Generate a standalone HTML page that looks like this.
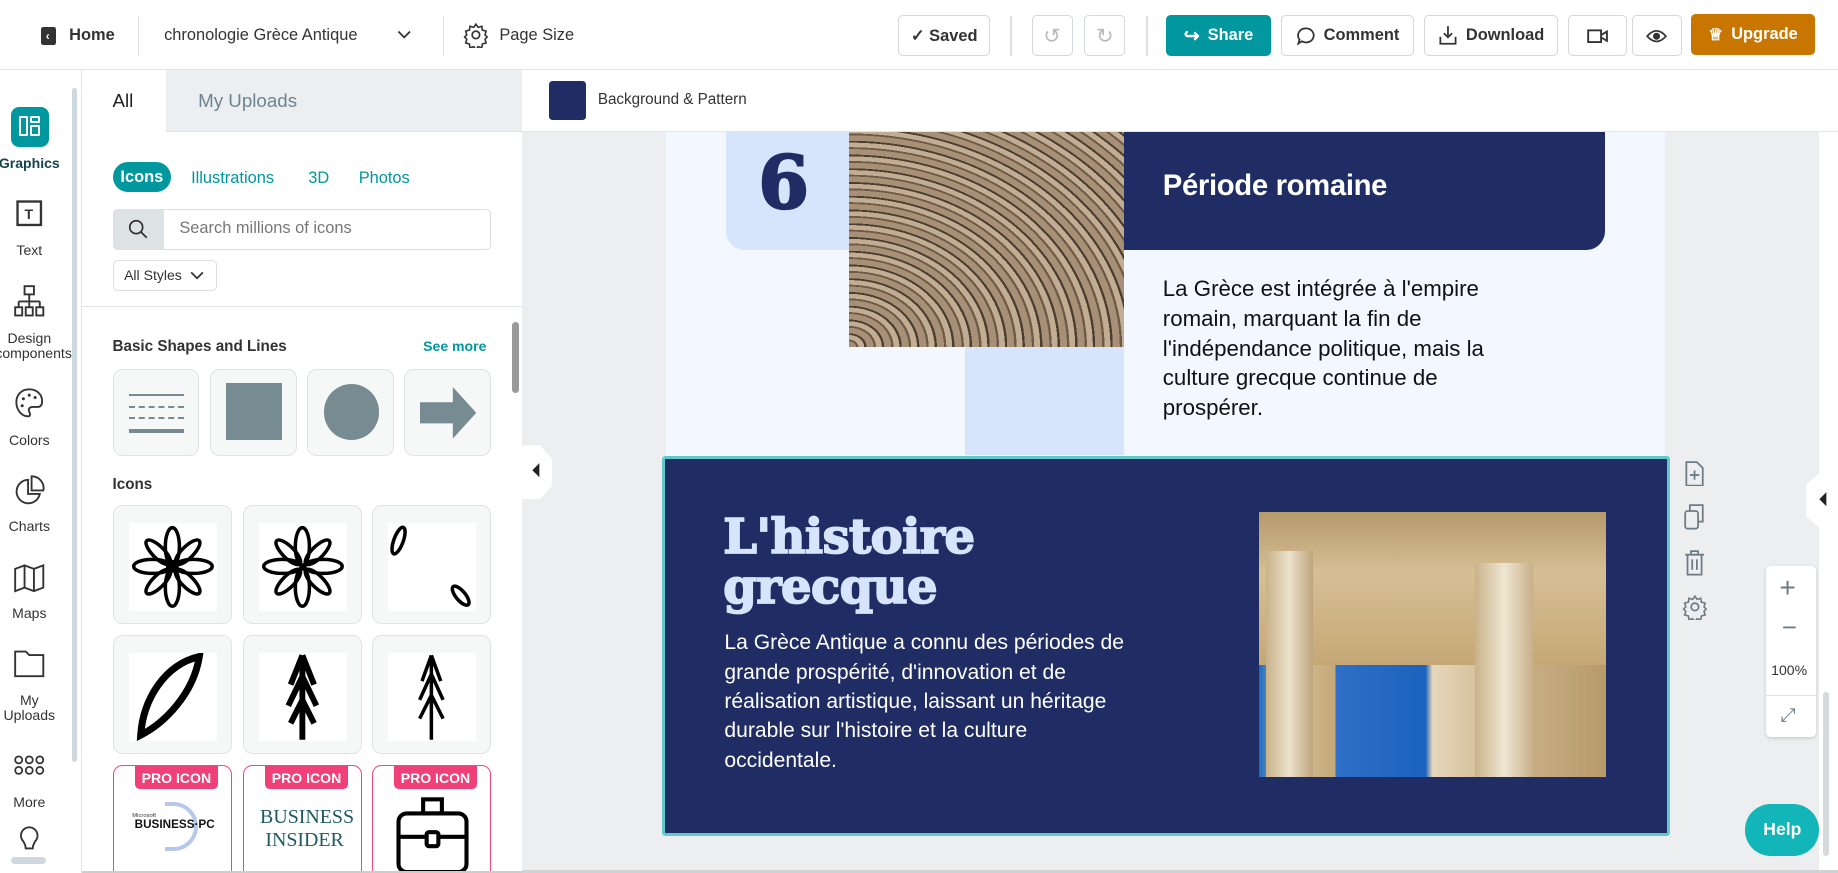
<!DOCTYPE html>
<html><head><meta charset="utf-8"><style>
*{box-sizing:border-box;margin:0;padding:0}
html,body{width:1838px;height:873px;overflow:hidden;background:#fff}
#w{position:relative;width:1568px;height:745px;zoom:1.17219;font-family:"Liberation Sans",sans-serif;color:#333;overflow:hidden}
.a{position:absolute}
.btn{position:absolute;top:13px;height:35px;border:1px solid #d5d8dc;border-radius:4px;background:#fff;font-size:14px;font-weight:bold;color:#333;display:flex;align-items:center;justify-content:center;gap:7px}
.vd{position:absolute;top:14px;width:1px;height:34px;background:#dde0e3}
.rl{position:absolute;left:0;width:58px;text-align:center;font-size:12px;color:#333;line-height:13px}
.ic{position:absolute;left:12px}
.tile{position:absolute;border:1px solid #e0e3e6;border-radius:8px;background:#f6f7f7}
.pro{border-color:#f0497a;background:#fff}
.pro span{position:absolute;left:18px;top:0;background:#f0407a;color:#fff;font-size:12px;font-weight:bold;padding:3px 6px;border-radius:0 0 4px 4px}
</style></head><body><div id="w">
<!-- top bar -->
<div class="a" style="left:0;top:0;width:1568px;height:60px;background:#fff;border-bottom:1px solid #e0e2e5"></div>
<div class="a" style="left:35px;top:23px;width:13px;height:15px;background:#333;border-radius:2px"></div>
<div class="a" style="left:39px;top:26px;color:#fff;font-size:10px;font-weight:bold">‹</div>
<div class="a" style="left:59px;top:22px;font-size:14px;font-weight:bold">Home</div>
<div class="vd" style="left:118px"></div>
<div class="a" style="left:140px;top:22px;font-size:14px;color:#333">chronologie Grèce Antique</div>
<svg class="a" style="left:338px;top:24px" width="14" height="12"><path d="M2 3l5 5 5-5" fill="none" stroke="#333" stroke-width="1.5"/></svg>
<div class="vd" style="left:378px"></div>
<svg class="a" style="left:395px;top:19px" width="22" height="22" viewBox="0 0 24 24"><circle cx="12" cy="12" r="3.5" fill="none" stroke="#333" stroke-width="1.6"/><path d="M12 2l2 3 3.5-1 .5 3.5 3.5 1-1 3.5 2 2-2 2 1 3.5-3.5 1-.5 3.5-3.5-1-2 3-2-3-3.5 1-.5-3.5-3.5-1 1-3.5-2-2 2-2-1-3.5 3.5-1 .5-3.5 3.5 1z" fill="none" stroke="#333" stroke-width="1.5"/></svg>
<div class="a" style="left:426px;top:22px;font-size:14px;color:#333">Page Size</div>
<div class="btn" style="left:766px;width:79px">✓ Saved</div>
<div class="vd" style="left:862px"></div>
<div class="btn" style="left:880px;width:35px;color:#bbb;font-weight:normal;font-size:18px">↺</div>
<div class="btn" style="left:925px;width:35px;color:#bbb;font-weight:normal;font-size:18px">↻</div>
<div class="vd" style="left:978px"></div>
<div class="btn" style="left:995px;width:89px;background:#00979f;border-color:#00979f;color:#fff"><span style="font-size:16px">↪</span>Share</div>
<div class="btn" style="left:1093px;width:113px;font-weight:bold"><svg width="17" height="17"><path d="M8.5 2a6.5 6 0 1 1-3.5 11L2 15l1-3.5A6.5 6 0 0 1 8.5 2z" fill="none" stroke="#333" stroke-width="1.5"/></svg>Comment</div>
<div class="btn" style="left:1215px;width:114px"><svg width="17" height="18"><path d="M8.5 1v9M5 7l3.5 3.5L12 7M2 10v6h13v-6" fill="none" stroke="#333" stroke-width="1.5"/></svg>Download</div>
<div class="btn" style="left:1338px;width:50px"><svg width="18" height="14"><rect x="1" y="2" width="11" height="10" fill="none" stroke="#333" stroke-width="1.6"/><path d="M12 6l5-3v8l-5-3" fill="none" stroke="#333" stroke-width="1.6"/></svg></div>
<div class="btn" style="left:1392px;width:43px"><svg width="18" height="14"><path d="M1 7q8-9 16 0q-8 9-16 0z" fill="none" stroke="#333" stroke-width="1.5"/><circle cx="9" cy="7" r="3" fill="#333"/></svg></div>
<div class="btn" style="left:1443px;width:105px;background:#c87600;border-color:#c87600;color:#fff;top:12px"><span style="font-size:14px">♕</span>Upgrade</div>

<!-- left rail -->
<div class="a" style="left:0;top:60px;width:70px;height:685px;background:#fff;border-right:1px solid #e3e5e7"></div>
<div class="a" style="left:61px;top:75px;width:5px;height:575px;background:#cfd8de;border-radius:3px"></div>
<div class="a" style="left:9px;top:91px;width:33px;height:34px;background:#00979f;border-radius:7px"></div>
<div class="a" style="left:16px;top:99px;width:8px;height:17px;border:2px solid #fff;border-radius:1px"></div>
<div class="a" style="left:26px;top:99px;width:8px;height:6px;border:2px solid #fff;border-radius:1px"></div>
<div class="a" style="left:26px;top:107px;width:8px;height:9px;border:2px solid #fff;border-radius:1px"></div>
<div class="rl" style="left:-4px;top:133px;width:58px;font-weight:bold;color:#16434d">Graphics</div>
<svg class="ic" style="top:169px" width="26" height="26"><rect x="3" y="3" width="20" height="20" fill="none" stroke="#333" stroke-width="2"/><text x="9" y="18" font-size="12" font-weight="bold" font-family="Liberation Sans" fill="#333">T</text></svg>
<div class="rl" style="left:-4px;top:207px">Text</div>
<svg class="ic" style="top:243px" width="26" height="28"><rect x="9" y="1" width="8" height="7" fill="none" stroke="#333" stroke-width="1.6"/><path d="M13 8v6M4 14h18M4 14v5M13 14v5M22 14v5" stroke="#333" stroke-width="1.6" fill="none"/><rect x="1" y="19" width="6" height="7" fill="none" stroke="#333" stroke-width="1.6"/><rect x="10" y="19" width="6" height="7" fill="none" stroke="#333" stroke-width="1.6"/><rect x="19" y="19" width="6" height="7" fill="none" stroke="#333" stroke-width="1.6"/></svg>
<div class="rl" style="left:-4px;top:282px">Design<br>components</div>
<svg class="ic" style="top:330px" width="26" height="28"><path d="M13 2C6 2 2 7 2 13s4 12 10 12c2 0 2-2 1-4s0-4 3-4h4c3 0 4-2 4-5C24 6 19 2 13 2z" fill="none" stroke="#333" stroke-width="1.6"/><circle cx="8" cy="10" r="1.3" fill="#333"/><circle cx="13" cy="7" r="1.3" fill="#333"/><circle cx="18" cy="9" r="1.3" fill="#333"/><circle cx="7" cy="16" r="1.3" fill="#333"/></svg>
<div class="rl" style="left:-4px;top:369px">Colors</div>
<svg class="ic" style="top:404px" width="26" height="28"><path d="M12 5a10 10 0 1 0 10 12H12z" fill="none" stroke="#333" stroke-width="1.6"/><path d="M15 2v12h10A10 10 0 0 0 15 2z" fill="none" stroke="#333" stroke-width="1.6"/></svg>
<div class="rl" style="left:-4px;top:443px">Charts</div>
<svg class="ic" style="top:480px" width="26" height="26"><path d="M1 5l8-3 8 3 8-3v19l-8 3-8-3-8 3z M9 2v19M17 5v19" fill="none" stroke="#333" stroke-width="1.6"/></svg>
<div class="rl" style="left:-4px;top:517px">Maps</div>
<svg class="ic" style="top:553px" width="26" height="26"><path d="M1 3h9l3 3h12v18H1z" fill="none" stroke="#333" stroke-width="1.6"/></svg>
<div class="rl" style="left:-4px;top:591px">My<br>Uploads</div>
<svg class="ic" style="top:643px" width="26" height="20"><g fill="none" stroke="#333" stroke-width="1.5"><circle cx="4" cy="5" r="3"/><circle cx="13" cy="5" r="3"/><circle cx="22" cy="5" r="3"/><circle cx="4" cy="14" r="3"/><circle cx="13" cy="14" r="3"/><circle cx="22" cy="14" r="3"/></g></svg>
<div class="rl" style="left:-4px;top:678px">More</div>
<svg class="ic" style="top:704px" width="26" height="24"><path d="M13 2a7 7 0 0 0-5 12c1 2 2 3 2 6h6c0-3 1-4 2-6a7 7 0 0 0-5-12z" fill="none" stroke="#333" stroke-width="1.6"/></svg>
<div class="a" style="left:9px;top:731px;width:30px;height:6px;background:#cfd8de;border-radius:3px"></div>

<!-- panel -->
<div class="a" style="left:70px;top:60px;width:375px;height:685px;background:#fff"></div>
<div class="a" style="left:142px;top:60px;width:303px;height:53px;background:#eceff1;border-bottom:1px solid #e0e3e6"></div>
<div class="a" style="left:96px;top:77px;font-size:16px;color:#222">All</div>
<div class="a" style="left:169px;top:77px;font-size:16px;color:#6e8390">My Uploads</div>
<div class="a" style="left:96px;top:138px;width:50px;height:26px;background:#00979f;border-radius:13px;color:#fff;font-size:14px;font-weight:bold;text-align:center;line-height:26px">Icons</div>
<div class="a" style="left:163px;top:144px;font-size:14px;color:#00979f">Illustrations</div>
<div class="a" style="left:263px;top:144px;font-size:14px;color:#00979f">3D</div>
<div class="a" style="left:306px;top:144px;font-size:14px;color:#00979f">Photos</div>
<div class="a" style="left:96px;top:178px;width:323px;height:35px;border:1px solid #dcdfe2;border-radius:4px;background:#fff"></div>
<div class="a" style="left:96px;top:178px;width:44px;height:35px;background:#dde2e5;border-radius:4px 0 0 4px"></div>
<svg class="a" style="left:109px;top:187px" width="18" height="18"><circle cx="7" cy="7" r="5.5" fill="none" stroke="#333" stroke-width="1.5"/><path d="M11 11l5 5" stroke="#333" stroke-width="1.5"/></svg>
<div class="a" style="left:153px;top:187px;font-size:14px;color:#777">Search millions of icons</div>
<div class="a" style="left:96px;top:222px;width:89px;height:26px;border:1px solid #dcdfe2;border-radius:4px;font-size:12px;line-height:24px;padding-left:9px;color:#333">All Styles</div>
<svg class="a" style="left:162px;top:230px" width="12" height="10"><path d="M1 2l5 5 5-5" fill="none" stroke="#333" stroke-width="1.5"/></svg>
<div class="a" style="left:70px;top:261px;width:375px;height:1px;background:#e0e3e6"></div>
<div class="a" style="left:96px;top:288px;font-size:13px;font-weight:bold;color:#333">Basic Shapes and Lines</div>
<div class="a" style="left:361px;top:288px;font-size:12px;font-weight:bold;color:#00979f">See more</div>
<div class="a" style="left:437px;top:275px;width:6px;height:60px;background:#999;border-radius:3px"></div>
<div class="tile" style="left:96px;top:315px;width:74px;height:74px"></div>
<div class="a" style="left:110px;top:336px;width:47px;height:2px;background:#778b93"></div>
<div class="a" style="left:110px;top:346px;width:47px;border-top:2px dashed #778b93"></div>
<div class="a" style="left:110px;top:356px;width:47px;border-top:2px dashed #778b93"></div>
<div class="a" style="left:110px;top:366px;width:47px;height:3px;background:#778b93"></div>
<div class="tile" style="left:179px;top:315px;width:74px;height:74px"></div>
<div class="a" style="left:193px;top:327px;width:48px;height:48px;background:#778b93"></div>
<div class="tile" style="left:262px;top:315px;width:74px;height:74px"></div>
<div class="a" style="left:276px;top:328px;width:47px;height:47px;background:#778b93;border-radius:50%"></div>
<div class="tile" style="left:345px;top:315px;width:74px;height:74px"></div>
<svg class="a" style="left:358px;top:330px" width="48" height="44"><path d="M0 13h28V0l20 22-20 22V31H0z" fill="#778b93"/></svg>
<div class="a" style="left:96px;top:406px;font-size:13px;font-weight:bold;color:#333">Icons</div>
<!-- icon tiles -->
<div class="tile" style="left:96px;top:431px;width:102px;height:101px"><div class="a" style="left:13px;top:14px;width:75px;height:75px;background:#fff"></div><svg class="a" style="left:13px;top:14px" width="75" height="75" viewBox="0 0 75 75"><g fill="none" stroke="#000" stroke-width="3"><ellipse cx="37" cy="20" rx="6" ry="16"/><ellipse cx="37" cy="55" rx="6" ry="16"/><ellipse cx="20" cy="37" rx="16" ry="6"/><ellipse cx="55" cy="37" rx="16" ry="6"/><ellipse cx="25" cy="25" rx="5" ry="14" transform="rotate(-45 25 25)"/><ellipse cx="50" cy="50" rx="5" ry="14" transform="rotate(-45 50 50)"/><ellipse cx="50" cy="25" rx="5" ry="14" transform="rotate(45 50 25)"/><ellipse cx="25" cy="50" rx="5" ry="14" transform="rotate(45 25 50)"/><circle cx="37" cy="37" r="4"/></g></svg></div>
<div class="tile" style="left:207px;top:431px;width:102px;height:101px"><div class="a" style="left:13px;top:14px;width:75px;height:75px;background:#fff"></div><svg class="a" style="left:13px;top:14px" width="75" height="75" viewBox="0 0 75 75"><g fill="none" stroke="#000" stroke-width="3"><ellipse cx="37" cy="20" rx="6" ry="16"/><ellipse cx="37" cy="55" rx="6" ry="16"/><ellipse cx="20" cy="37" rx="16" ry="6"/><ellipse cx="55" cy="37" rx="16" ry="6"/><ellipse cx="25" cy="25" rx="5" ry="14" transform="rotate(-45 25 25)"/><ellipse cx="50" cy="50" rx="5" ry="14" transform="rotate(-45 50 50)"/><ellipse cx="50" cy="25" rx="5" ry="14" transform="rotate(45 50 25)"/><ellipse cx="25" cy="50" rx="5" ry="14" transform="rotate(45 25 50)"/></g></svg></div>
<div class="tile" style="left:317px;top:431px;width:102px;height:101px"><div class="a" style="left:13px;top:14px;width:75px;height:75px;background:#fff"></div><svg class="a" style="left:13px;top:14px" width="75" height="75"><g fill="none" stroke="#000" stroke-width="3"><ellipse cx="9" cy="15" rx="4" ry="12" transform="rotate(20 9 15)"/><ellipse cx="62" cy="62" rx="4" ry="10" transform="rotate(-40 62 62)"/></g></svg></div>
<div class="tile" style="left:96px;top:542px;width:102px;height:101px"><div class="a" style="left:13px;top:14px;width:75px;height:75px;background:#fff"></div><svg class="a" style="left:13px;top:14px" width="75" height="75"><path d="M60 3C30 10 12 40 10 70C30 60 55 35 60 3z" fill="none" stroke="#000" stroke-width="6"/></svg></div>
<div class="tile" style="left:207px;top:542px;width:102px;height:101px"><div class="a" style="left:13px;top:14px;width:75px;height:75px;background:#fff"></div><svg class="a" style="left:13px;top:14px" width="75" height="75"><path d="M37 2v72M37 2l-10 25M37 2l10 25M37 20l-12 25M37 20l12 25M37 40l-10 20M37 40l10 20" fill="none" stroke="#000" stroke-width="5"/></svg></div>
<div class="tile" style="left:317px;top:542px;width:102px;height:101px"><div class="a" style="left:13px;top:14px;width:75px;height:75px;background:#fff"></div><svg class="a" style="left:13px;top:14px" width="75" height="75"><path d="M37 2v72M37 2l-8 22M37 2l8 22M37 18l-10 22M37 18l10 22M37 36l-10 20M37 36l10 20" fill="none" stroke="#000" stroke-width="3"/></svg></div>
<div class="tile pro" style="left:96px;top:653px;width:102px;height:100px"><div class="a" style="left:13px;top:26px;width:75px;height:70px;background:#fff"></div><span>PRO ICON</span><div class="a" style="left:16px;top:40px;font-size:5px">Microsoft</div><div class="a" style="left:44px;top:30px;width:28px;height:42px;border:4px solid #b8c8ea;border-left:none;border-radius:0 30px 30px 0"></div><div class="a" style="left:18px;top:44px;font-size:10px;font-weight:bold;color:#111">BUSINESS·PC</div></div>
<div class="tile pro" style="left:207px;top:653px;width:102px;height:100px"><span>PRO ICON</span><div class="a" style="left:14px;top:34px;font-family:'Liberation Serif',serif;font-size:17px;color:#1e5a60;line-height:19px;text-align:center;width:76px">BUSINESS<br>INSIDER</div></div>
<div class="tile pro" style="left:317px;top:653px;width:102px;height:100px"><span>PRO ICON</span><svg class="a" style="left:19px;top:26px" width="64" height="66"><g fill="none" stroke="#000" stroke-width="3.5"><rect x="3" y="14" width="58" height="50" rx="7"/><rect x="24" y="2" width="16" height="12"/><path d="M3 34h58"/><rect x="27" y="30" width="10" height="12" rx="2" fill="#fff"/></g></svg></div>
<div class="a" style="left:70px;top:743px;width:375px;height:2px;background:#ccc"></div>

<!-- canvas -->
<div class="a" style="left:445px;top:60px;width:1123px;height:685px;background:#eceef0"></div>
<div class="a" style="left:445px;top:60px;width:1123px;height:53px;background:#fff;border-bottom:1px solid #e4e6e8"></div>
<div class="a" style="left:468px;top:69px;width:32px;height:33px;background:#1f2d64;border-radius:3px"></div>
<div class="a" style="left:510px;top:78px;font-size:13px;color:#333">Background &amp; Pattern</div>
<div class="a" style="left:445px;top:380px;width:26px;height:46px;background:#fff;clip-path:polygon(0 0,60% 0,100% 25%,100% 75%,60% 100%,0 100%)"></div>
<svg class="a" style="left:452px;top:394px" width="10" height="14"><path d="M8 1L2 7l6 6z" fill="#222"/></svg>
<!-- page top -->
<div class="a" style="left:568px;top:113px;width:852px;height:276px;background:#f3f7ff"></div>
<div class="a" style="left:619px;top:113px;width:140px;height:100px;background:#d6e4fc;border-radius:0 0 0 16px"></div>
<div class="a" style="left:647px;top:122px;font-family:'DejaVu Serif','Liberation Serif',serif;font-weight:900;font-size:62px;color:#1f2d64;line-height:70px;-webkit-text-stroke:2px #1f2d64">6</div>
<div class="a" style="left:823px;top:296px;width:136px;height:92px;background:#d6e4fc"></div>
<div class="a" style="left:724px;top:113px;width:235px;height:183px;background:repeating-radial-gradient(ellipse at 0% 100%,#a89076 0 6px,#6d5a48 6px 8px,#c2ad92 8px 13px,#4a3e33 13px 15px);"></div>
<div class="a" style="left:959px;top:113px;width:410px;height:100px;background:#1f2d64;border-radius:0 0 16px 0"></div>
<div class="a" style="left:992px;top:144px;font-size:25px;font-weight:bold;color:#fff;letter-spacing:-0.3px">Période romaine</div>
<div class="a" style="left:992px;top:234px;font-size:19px;line-height:25.3px;color:#111;width:320px">La Grèce est intégrée à l'empire romain, marquant la fin de l'indépendance politique, mais la culture grecque continue de prospérer.</div>
<!-- selected page -->
<div class="a" style="left:565px;top:389px;width:860px;height:324px;background:#1f2d64;border:3px solid #5fc9cc;border-radius:3px"></div>
<div class="a" style="left:617px;top:438px;font-family:'DejaVu Serif','Liberation Serif',serif;font-weight:900;font-size:41px;line-height:42px;color:#d6e4fc;letter-spacing:-0.5px;-webkit-text-stroke:1.5px #d6e4fc">L'histoire<br>grecque</div>
<div class="a" style="left:618px;top:536px;font-size:18px;line-height:25px;color:#fff;white-space:nowrap">La Grèce Antique a connu des périodes de<br>grande prospérité, d'innovation et de<br>réalisation artistique, laissant un héritage<br>durable sur l'histoire et la culture<br>occidentale.</div>
<div class="a" style="left:1074px;top:437px;width:296px;height:226px;background:linear-gradient(90deg,#1a6cc4 0,#d9c59e 8%,#c4a878 22%,#2f6fc6 22%,#1b63be 48%,#e6d7bb 50%,#cdb58c 70%,#b79a6a 100%)"></div>
<div class="a" style="left:1074px;top:437px;width:296px;height:130px;background:linear-gradient(180deg,#b59a6c,#d5bf94 40%,#c6a876 100%)"></div>
<div class="a" style="left:1258px;top:480px;width:50px;height:183px;background:linear-gradient(90deg,#c9b28a,#efe6d2,#c8b08a)"></div>
<div class="a" style="left:1080px;top:470px;width:40px;height:193px;background:linear-gradient(90deg,#c9b28a,#ece2cc,#bda47c)"></div>
<!-- side tools -->
<svg class="a" style="left:1437px;top:393px" width="18" height="22"><path d="M2 1h9l5 5v15H2z" fill="none" stroke="#6d7b85" stroke-width="1.5"/><path d="M9 8v8M5 12h8" stroke="#6d7b85" stroke-width="1.5"/></svg>
<svg class="a" style="left:1437px;top:430px" width="18" height="22"><rect x="1" y="6" width="11" height="15" rx="2" fill="none" stroke="#6d7b85" stroke-width="1.5"/><path d="M5 6V1h11v14h-4" fill="none" stroke="#6d7b85" stroke-width="1.5"/></svg>
<svg class="a" style="left:1437px;top:469px" width="18" height="22"><path d="M1 4h16M6 4V1h6v3M3 4v17h12V4M7 8v9M11 8v9" fill="none" stroke="#6d7b85" stroke-width="1.5"/></svg>
<svg class="a" style="left:1435px;top:507px" width="22" height="22" viewBox="0 0 24 24"><circle cx="12" cy="12" r="3.5" fill="none" stroke="#6d7b85" stroke-width="1.6"/><path d="M12 2l2 3 3.5-1 .5 3.5 3.5 1-1 3.5 2 2-2 2 1 3.5-3.5 1-.5 3.5-3.5-1-2 3-2-3-3.5 1-.5-3.5-3.5-1 1-3.5-2-2 2-2-1-3.5 3.5-1 .5-3.5 3.5 1z" fill="none" stroke="#6d7b85" stroke-width="1.5"/></svg>
<div class="a" style="left:1507px;top:483px;width:42px;height:146px;background:#fff;border-radius:4px;box-shadow:0 1px 3px rgba(0,0,0,.15)"></div>
<div class="a" style="left:1518px;top:488px;font-size:24px;color:#6d7b85">+</div>
<div class="a" style="left:1520px;top:524px;font-size:22px;color:#6d7b85">−</div>
<div class="a" style="left:1511px;top:565px;font-size:12px;color:#333">100%</div>
<div class="a" style="left:1507px;top:593px;width:42px;height:1px;background:#e0e3e6"></div>
<div class="a" style="left:1519px;top:601px;font-size:16px;color:#6d7b85">⤢</div>
<div class="a" style="left:1552px;top:113px;width:16px;height:632px;background:#fff"></div>
<div class="a" style="left:1541px;top:404px;width:27px;height:46px;background:#fff;clip-path:polygon(40% 0,100% 0,100% 100%,40% 100%,0 80%,0 20%)"></div>
<svg class="a" style="left:1550px;top:419px" width="10" height="14"><path d="M8 1L2 7l6 6z" fill="#222"/></svg>
<div class="a" style="left:1555px;top:590px;width:5px;height:140px;background:#d6dadd;border-radius:3px"></div>
<div class="a" style="left:1489px;top:686px;width:63px;height:44px;background:#12b5b8;border-radius:22px;color:#fff;font-size:15px;font-weight:bold;text-align:center;line-height:44px">Help</div>
<div class="a" style="left:445px;top:742px;width:1123px;height:3px;background:#d0d3d6"></div>
</div></body></html>
